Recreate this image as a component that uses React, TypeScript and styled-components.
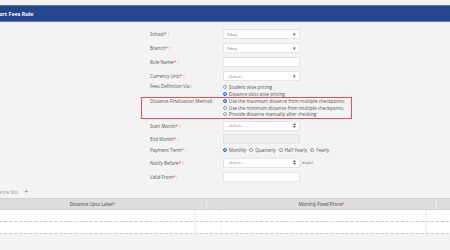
import styled, { createGlobalStyle } from "styled-components";

const Global = createGlobalStyle`
  html, body {
    margin: 0;
    padding: 0;
    background: #f3f3f3;
    overflow: hidden;
  }
  body {
    font-family: "Open Sans", "Noto Sans", sans-serif;
  }
`;

export default function App() {
  return (
    <>
      <Global />
      <Page>
        <TitleBar>
          <Title>Transport Fees Rule</Title>
        </TitleBar>

        <Form>
          <Row $mt={0}>
            <Label>
              School<Req>*</Req> :
            </Label>
            <Field>
              <span>Yduly</span>
              <Caret>▾</Caret>
            </Field>
          </Row>
          <Row $mt={4}>
            <Label>
              Branch<Req>*</Req> :
            </Label>
            <Field>
              <span>Yduly</span>
              <Caret>▾</Caret>
            </Field>
          </Row>
          <Row $mt={4}>
            <Label>
              Rule Name<Req>*</Req> :
            </Label>
            <Field />
          </Row>
          <Row $mt={4}>
            <Label>
              Currency Unit<Req>*</Req> :
            </Label>
            <Field>
              <span>--Select--</span>
              <Caret>▾</Caret>
            </Field>
          </Row>

          <Row $mt={2}>
            <Label $lh={7}>Fees Definition Via :</Label>
            <div>
              <RadioLine>
                <Radio />
                Student wise pricing
              </RadioLine>
              <RadioLine>
                <Radio $checked />
                Distance slots wise pricing
              </RadioLine>
            </div>
          </Row>

          <Row $mt={0} $boxed>
            <Label $lh={6.6}>Distance Finalization Method :</Label>
            <div>
              <RadioLine $lh={6.6}>
                <Radio $checked />
                Use the maximum distance from multiple checkpoints
              </RadioLine>
              <RadioLine $lh={6.6}>
                <Radio />
                Use the minimum distance from multiple checkpoints
              </RadioLine>
              <RadioLine $lh={6.6}>
                <Radio />
                Provide distance manually after checking
              </RadioLine>
            </div>
          </Row>

          <Row $mt={2}>
            <Label>
              Start Month<Req>*</Req> :
            </Label>
            <Field>
              <span>--Select--</span>
              <UpDown />
            </Field>
          </Row>
          <Row $mt={3}>
            <Label>
              End Month<Req>*</Req> :
            </Label>
            <Field $disabled />
          </Row>
          <Row $mt={3}>
            <Label $lh={7}>
              Payment Term<Req>*</Req> :
            </Label>
            <InlineRadios>
              <RadioLine>
                <Radio $checked />
                Monthly
              </RadioLine>
              <RadioLine>
                <Radio />
                Quarterly
              </RadioLine>
              <RadioLine>
                <Radio />
                Half Yearly
              </RadioLine>
              <RadioLine>
                <Radio />
                Yearly
              </RadioLine>
            </InlineRadios>
          </Row>
          <Row $mt={4}>
            <Label>
              Notify Before<Req>*</Req> :
            </Label>
            <Field>
              <span>--Select--</span>
              <UpDown />
            </Field>
            <Unit>day(s)</Unit>
          </Row>
          <Row $mt={4}>
            <Label>
              Valid From<Req>*</Req> :
            </Label>
            <Field />
          </Row>
        </Form>

        <SlotHead>
          <SlotTitle>Distance Slot</SlotTitle>
          <Plus>+</Plus>
        </SlotHead>

        <Table>
          <HeadRow>
            <HeadCell>
              Distance Upto Label<Req>*</Req>
            </HeadCell>
            <HeadCell>
              Monthly Fixed Proce<Req>*</Req>
            </HeadCell>
            <HeadCell />
          </HeadRow>
          {[0, 1].map((i) => (
            <BodyRow key={i}>
              <BodyCell />
              <BodyCell />
              <BodyCell />
              <BodyCell />
            </BodyRow>
          ))}
        </Table>
      </Page>
    </>
  );
}

function UpDown() {
  return (
    <svg width="3" height="5" viewBox="0 0 6 10">
      <path d="M3 0 L6 4 L0 4 Z M3 10 L0 6 L6 6 Z" fill="#555" />
    </svg>
  );
}

const Page = styled.div`
  width: 450px;
  height: 250px;
  overflow: hidden;
  padding-top: 5px;
  box-sizing: border-box;
`;

const TitleBar = styled.div`
  height: 15px;
  background: #23468c;
  border-top: 1px solid #5d78b0;
  border-bottom: 1px solid #5d78b0;
  display: flex;
  align-items: center;
  color: #fff;
  font-weight: 700;
  font-size: 5.3px;
`;

const Title = styled.span`
  margin-left: -19px;
  white-space: nowrap;
`;

const Form = styled.div`
  display: flex;
  flex-direction: column;
  padding-left: 150px;
  margin-top: 7px;
`;

const Row = styled.div<{ $mt: number; $boxed?: boolean }>`
  display: grid;
  grid-template-columns: 73px 77px auto;
  align-items: start;
  margin-top: ${(p) => p.$mt}px;
  ${(p) =>
    p.$boxed &&
    `
    border: 1px solid #e5505b;
    margin-left: -9px;
    padding-left: 8px;
    width: 201px;
  `}
`;

const Label = styled.div<{ $lh?: number }>`
  font-size: 4.6px;
  color: #555;
  line-height: ${(p) => p.$lh ?? 10}px;
  white-space: nowrap;
`;

const Req = styled.span`
  color: #e53935;
`;

const Field = styled.div<{ $disabled?: boolean }>`
  height: 10px;
  box-sizing: border-box;
  background: ${(p) => (p.$disabled ? "#ededed" : "#fff")};
  border: 1px solid #e4e4e4;
  border-radius: 1px;
  display: flex;
  align-items: center;
  justify-content: space-between;
  padding: 0 3px;
  font-size: 4px;
  color: #777;
`;

const Caret = styled.span`
  font-size: 4.5px;
  color: #555;
`;

const Unit = styled.span`
  font-size: 4px;
  color: #666;
  line-height: 10px;
  margin-left: 2px;
`;

const RadioLine = styled.div<{ $lh?: number }>`
  display: flex;
  align-items: center;
  gap: 1.8px;
  height: ${(p) => p.$lh ?? 7}px;
  font-size: 4.6px;
  color: #555;
  white-space: nowrap;
`;

const Radio = styled.span<{ $checked?: boolean }>`
  width: 4px;
  height: 4px;
  box-sizing: border-box;
  border-radius: 50%;
  border: 0.7px solid ${(p) => (p.$checked ? "#2a6fdb" : "#999")};
  background: ${(p) => (p.$checked ? "#2a6fdb" : "#fff")};
  box-shadow: ${(p) => (p.$checked ? "inset 0 0 0 0.5px #fff" : "none")};
  flex-shrink: 0;
`;

const InlineRadios = styled.div`
  display: flex;
  gap: 3px;
`;

const SlotHead = styled.div`
  display: flex;
  align-items: center;
  height: 8px;
  margin-top: 6px;
`;

const SlotTitle = styled.span`
  margin-left: -9.5px;
  font-size: 4.6px;
  color: #999;
  white-space: nowrap;
`;

const Plus = styled.span`
  margin-left: 6px;
  font-size: 7px;
  color: #777;
  line-height: 8px;
`;

const Table = styled.div`
  margin-top: 2px;
  margin-left: -21px;
  width: 475px;
`;

const HeadRow = styled.div`
  display: grid;
  grid-template-columns: 228px 230px 1fr;
  background: #dddddd;
  border-top: 1px solid #d2d2d2;
  border-bottom: 1px solid #d2d2d2;
`;

const HeadCell = styled.div`
  height: 10px;
  line-height: 10px;
  text-align: center;
  font-size: 4.6px;
  color: #444;
  border-right: 1px solid #ececec;
`;

const BodyRow = styled.div`
  display: grid;
  grid-template-columns: 215px 24px 204px 1fr;
  column-gap: 1.5px;
  border-bottom: 1px dashed #cfcfcf;
`;

const BodyCell = styled.div`
  height: 11px;
  background: #fff;
`;
